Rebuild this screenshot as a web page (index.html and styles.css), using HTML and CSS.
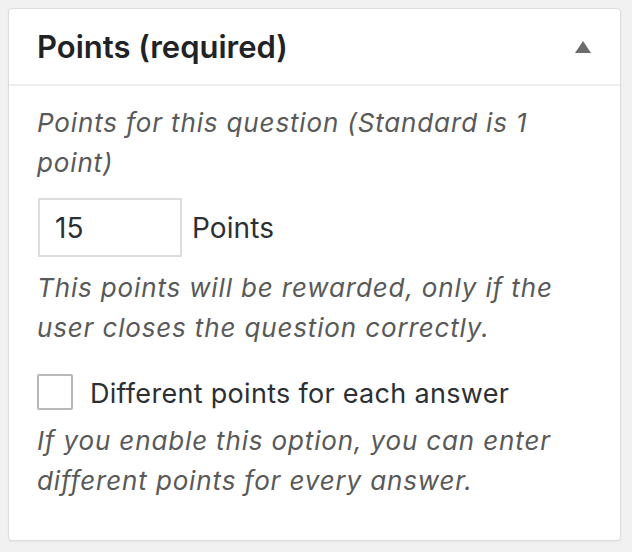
FILE: index.html
```html
<!DOCTYPE html>
<html>
<head>
<meta charset="utf-8">
<link rel="stylesheet" href="styles.css">
</head>
<body>
<div class="postbox">
  <div class="hndle">
    <h2 class="title">Points (required)</h2>
    <span class="toggle"></span>
  </div>
  <div class="inside">
    <p class="desc first">Points for this question (Standard is 1 point)</p>
    <div class="points-row">
      <input class="points-input" type="text" value="15">
      <span class="points-label">Points</span>
    </div>
    <p class="desc second">This points will be rewarded, only if the user closes the question correctly.</p>
    <label class="check-row">
      <span class="checkbox"></span>
      <span class="check-label">Different points for each answer</span>
    </label>
    <p class="desc third">If you enable this option, you can enter different points for every answer.</p>
  </div>
</div>
</body>
</html>
```

FILE: styles.css
```css
html, body {
  margin: 0;
  padding: 0;
  background: #f1f1f1;
}
body {
  padding: 8px 11px 11px 8px;
  font-family: "Inter", "Liberation Sans", sans-serif;
}
.postbox {
  width: 611px;
  height: 531px;
  background: #fff;
  border: 1px solid #dcdcde;
  border-radius: 4px;
  box-shadow: 0 1px 2px rgba(0,0,0,0.05);
}
.hndle {
  height: 75px;
  border-bottom: 2px solid #eeeeee;
  display: flex;
  align-items: center;
  justify-content: space-between;
  padding: 0 28px 0 28px;
}
.title {
  margin: 0;
  font-size: 31px;
  font-weight: 600;
  color: #1f2326;
  letter-spacing: 0;
}
.toggle {
  width: 0;
  height: 0;
  border-left: 8.5px solid transparent;
  border-right: 8.5px solid transparent;
  border-bottom: 12px solid #6b6b6b;
  margin-right: 1px;
  margin-top: 1px;
}
.inside {
  padding: 0 28px;
}
.desc {
  margin: 0;
  font-size: 26px;
  line-height: 40px;
  letter-spacing: 0.85px;
  font-style: italic;
  color: #595959;
}
.desc.first {
  margin-top: 17px;
}
.points-row {
  display: flex;
  align-items: center;
  gap: 10px;
  margin: 15px 0 11px 1px;
}
.points-input {
  width: 144px;
  height: 59px;
  box-sizing: border-box;
  border: 2px solid #dddddd;
  border-radius: 0;
  padding: 0 15px;
  font-family: inherit;
  font-size: 28px;
  color: #2c3034;
  outline: none;
  margin: 0;
}
.points-label {
  font-size: 28px;
  letter-spacing: 0.1px;
  color: #2c3034;
}
.check-row {
  display: flex;
  align-items: flex-start;
  gap: 17px;
  margin: 24px 0 9px 0;
  height: 40px;
}
.checkbox {
  width: 36px;
  height: 36px;
  box-sizing: border-box;
  border: 2px solid #b8b8b8;
  border-radius: 2px;
  background: #fff;
  margin-top: 2px;
}
.check-label {
  font-size: 27px;
  line-height: 40px;
  padding-top: 2px;
  letter-spacing: 0.3px;
  color: #2c3034;
}
```
